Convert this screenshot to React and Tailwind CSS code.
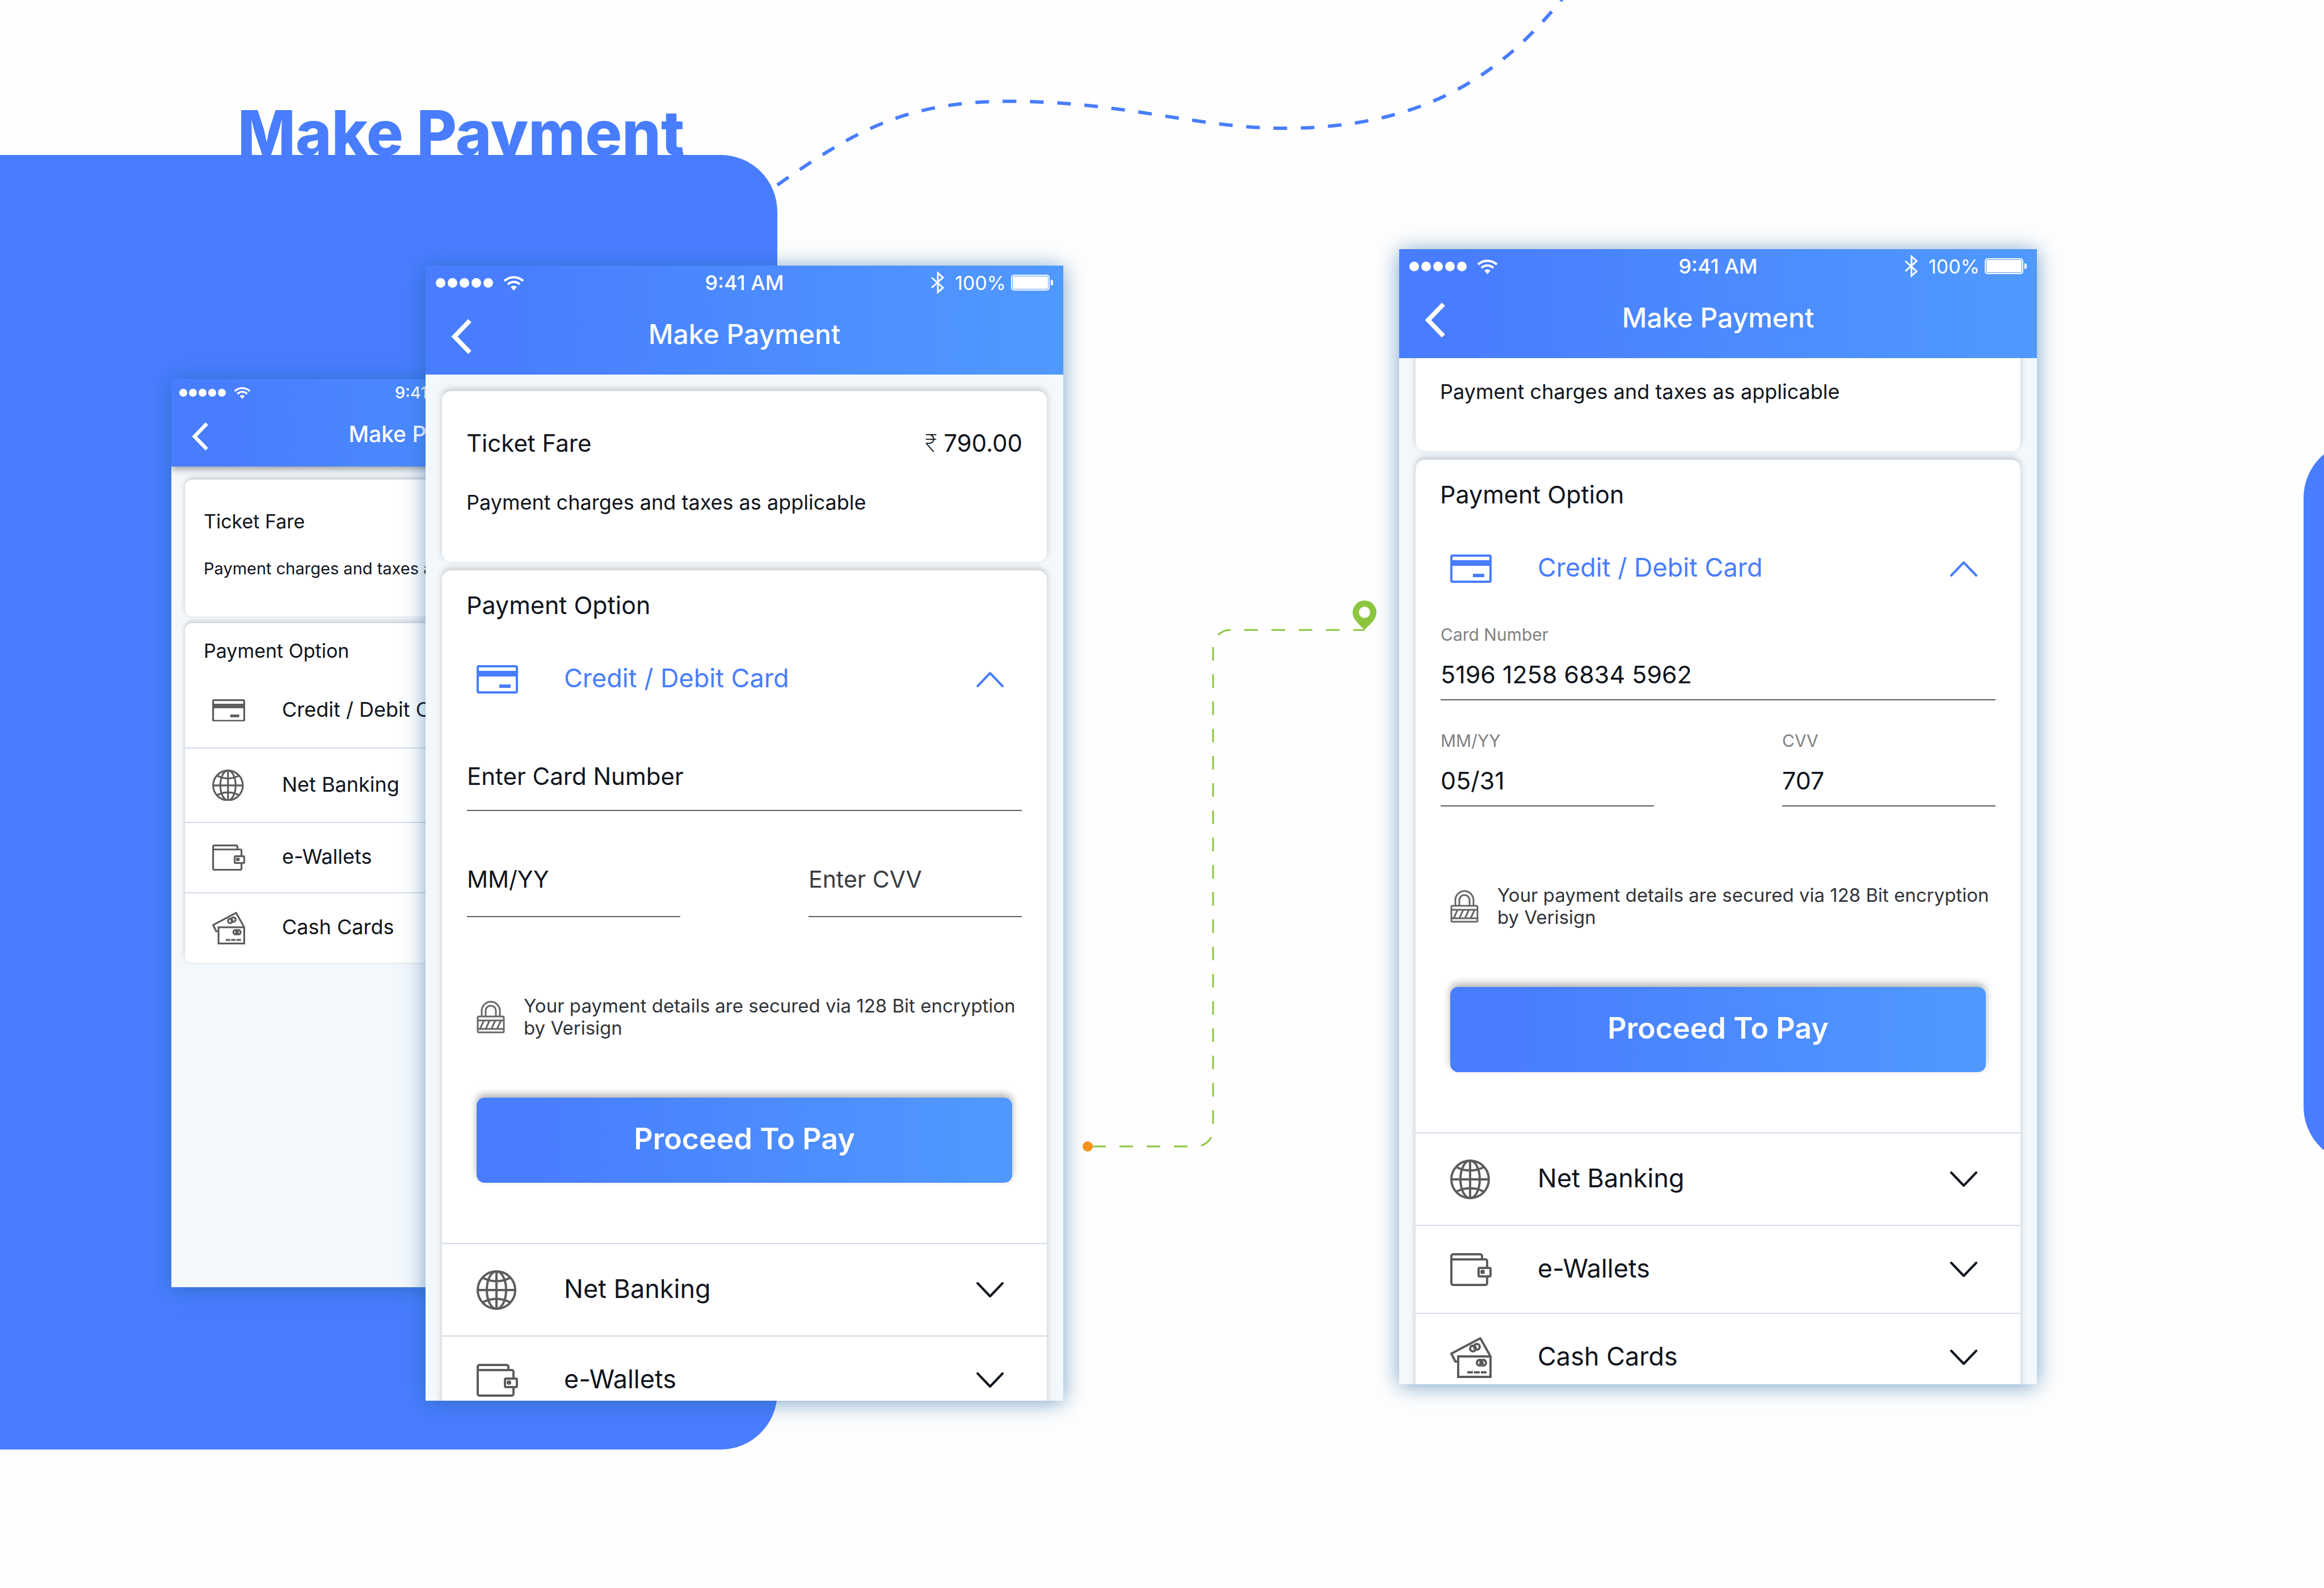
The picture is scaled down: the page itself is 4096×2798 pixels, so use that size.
import React, { useId } from "react";

/* ---------- icons ---------- */

function WifiIcon({ className }) {
  return (
    <svg viewBox="0 0 37 27" className={className} fill="none" stroke="currentColor" strokeWidth="4" aria-hidden="true">
      <path d="M2 10a24 24 0 0 1 33 0" />
      <path d="M8 16a15 15 0 0 1 21 0" />
      <path d="M18.500 27l-5.500-6.500a9 9 0 0 1 11 0z" fill="currentColor" stroke="none" />
    </svg>
  );
}

function BluetoothIcon({ className }) {
  return (
    <svg viewBox="0 0 25 40" className={className} fill="none" stroke="currentColor" strokeWidth="3" aria-hidden="true">
      <path d="M2 11l20 18-9 8V3l9 8L2 29" />
    </svg>
  );
}

function BatteryIcon({ className }) {
  return (
    <svg viewBox="0 0 74 28" className={className} aria-hidden="true">
      <rect x="1" y="1" width="66" height="26" rx="4" fill="none" stroke="currentColor" strokeWidth="2" />
      <rect x="3" y="3" width="62" height="22" rx="2" fill="currentColor" />
      <path d="M70 9h1a3 3 0 0 1 3 3v4a3 3 0 0 1-3 3h-1z" fill="currentColor" />
    </svg>
  );
}

function BackIcon({ className }) {
  return (
    <svg viewBox="0 0 36 62" className={className} fill="none" stroke="currentColor" strokeWidth="8" aria-hidden="true">
      <path d="M33 3L6 31l27 28" />
    </svg>
  );
}

function ChevronIcon({ up }) {
  return (
    <svg viewBox="0 0 48 28" className="w-12 shrink-0" fill="none" stroke="currentColor" strokeWidth="4" strokeLinecap="round" strokeLinejoin="round" aria-hidden="true">
      <path d={up ? "M2 26L24 3l22 23" : "M2 2l22 23L46 2"} />
    </svg>
  );
}

function CardIcon({ className }) {
  return (
    <svg viewBox="0 0 73 50" className={className} aria-hidden="true">
      <rect x="2" y="2" width="69" height="46" rx="2" fill="none" stroke="currentColor" strokeWidth="4" />
      <rect x="2" y="10" width="69" height="10" fill="currentColor" />
      <rect x="40" y="34" width="20" height="6" fill="currentColor" />
    </svg>
  );
}

function GlobeIcon({ className }) {
  return (
    <svg viewBox="0 0 73 70" className={className} fill="none" stroke="currentColor" strokeWidth="4" aria-hidden="true">
      <circle cx="35" cy="35" r="33" />
      <ellipse cx="35" cy="35" rx="17" ry="33" />
      <path d="M35 2v66M2 35h66M10 13q25 13 50 0M10 57q25-13 50 0" />
    </svg>
  );
}

function WalletIcon({ className }) {
  return (
    <svg viewBox="0 0 73 58" className={className} fill="none" stroke="currentColor" strokeWidth="4" aria-hidden="true">
      <path d="M2 11V5a3 3 0 0 1 3-3h48a3 3 0 0 1 3 3v6" />
      <path d="M2 11h60a3 3 0 0 1 3 3v12M65 41v12a3 3 0 0 1-3 3H5a3 3 0 0 1-3-3V11" />
      <rect x="50" y="26" width="21" height="15" rx="2" />
      <circle cx="57" cy="33" r="4" fill="currentColor" stroke="none" />
    </svg>
  );
}

function CashIcon({ className }) {
  return (
    <svg viewBox="0 0 73 73" className={className} fill="none" stroke="currentColor" strokeWidth="4" aria-hidden="true">
      <path d="M12 44l-3 0L2 30 53 3l17 30" strokeLinejoin="round" />
      <rect x="14" y="35" width="57" height="36" />
      <circle cx="40" cy="21" r="5" />
      <circle cx="47" cy="18" r="5" />
      <circle cx="52" cy="46" r="5" />
      <circle cx="58" cy="46" r="5" />
      <path d="M30 63h10M42 63h10M54 63h10" />
    </svg>
  );
}

function LockIcon({ className }) {
  return (
    <svg viewBox="0 0 50 58" className={className} fill="none" stroke="currentColor" strokeWidth="3" aria-hidden="true">
      <path d="M9 27V18a16 16 0 0 1 32 0v9M16 27V18a9 9 0 0 1 18 0v9" />
      <rect x="2" y="28" width="46" height="28" rx="2" />
      <path d="M2 35h46M2 50h46M6 50l7-15M16 50l7-15M26 50l7-15M36 50l7-15" />
    </svg>
  );
}

/* ---------- sizes ---------- */

const LARGE = {
  header: "h-[192px]",
  status: "h-[60px] px-[18px] text-[34px]",
  time: "text-[36px]",
  dots: "gap-1",
  dot: "size-[17px]",
  wifi: "ml-[18px] w-[37px]",
  nav: "h-[122px] text-[48px]",
  back: "pl-[45px] pt-2",
  backIcon: "w-9",
  body: "px-[29px] pt-[29px] gap-[15px]",
  card: "rounded-[16px] shadow-[0_-4px_12px_rgba(0,0,0,0.2)]",
  fare: "px-[43px] pt-[68px] pb-[83px]",
  fareRow: "text-[42px] leading-[48px]",
  note: "mt-[58px] text-[36px] leading-[44px]",
  heading: "px-[43px] pt-[37px] pb-[25px] text-[43px] leading-[48px]",
  row: "pl-[61px] pr-[76px] text-[45px]",
  tall: "h-[163px]",
  short: "h-[155px]",
  icon: "w-[73px]",
  label: "pl-[81px] pb-1",
};

const SMALL = {
  header: "h-[154px] shadow-[0_4px_12px_rgba(0,0,0,0.4)]",
  status: "h-[48px] px-[14px] text-[27px]",
  time: "text-[29px]",
  dots: "gap-[3px]",
  dot: "size-[14px]",
  wifi: "ml-[14px] w-[30px]",
  nav: "h-[98px] text-[39px]",
  back: "pl-[36px] pt-2",
  backIcon: "w-[29px]",
  body: "px-[24px] pt-[23px] gap-3",
  card: "rounded-[13px] shadow-[0_-3px_10px_rgba(0,0,0,0.2)]",
  fare: "px-[33px] pt-[55px] pb-[66px]",
  fareRow: "text-[34px] leading-[38px]",
  note: "mt-[46px] text-[29px] leading-[36px]",
  heading: "px-[33px] pt-[30px] pb-5 text-[34px] leading-[38px]",
  row: "pl-[48px] pr-[61px] text-[36px]",
  tall: "h-[131px]",
  short: "h-[124px]",
  icon: "w-[58px]",
  label: "pl-[65px] pb-1",
};

/* ---------- phone parts ---------- */

function PhoneHeader({ s, full }) {
  return (
    <header className={`relative shrink-0 bg-linear-to-r from-[#487dff] from-10% to-[#5099ff] text-white ${s.header}`}>
      <div className={`grid grid-cols-[1fr_auto_1fr] items-center ${s.status}`}>
        <div className="flex items-center">
          <span className={`flex ${s.dots}`}>
            {[0, 1, 2, 3, 4].map((n) => (
              <span key={n} className={`rounded-full bg-white ${s.dot}`} />
            ))}
          </span>
          <WifiIcon className={s.wifi} />
        </div>
        <span className={`font-medium ${s.time}`}>9:41 AM</span>
        {full && (
          <div className="flex items-center justify-end">
            <BluetoothIcon className="mr-[18px] w-[25px]" />
            <span>100%</span>
            <BatteryIcon className="ml-[9px] w-[74px]" />
          </div>
        )}
      </div>
      <div className={`grid grid-cols-[1fr_auto_1fr] items-center ${s.nav}`}>
        <button type="button" aria-label="Back" className={`justify-self-start ${s.back}`}>
          <BackIcon className={s.backIcon} />
        </button>
        <h2 className="font-medium">Make Payment</h2>
      </div>
    </header>
  );
}

function FareCard({ s, amount }) {
  return (
    <section className={`bg-white ${s.card} ${s.fare}`}>
      <div className={`flex justify-between ${s.fareRow}`}>
        <span>Ticket Fare</span>
        {amount && (
          <span>
            <span className="font-extralight">₹</span> {amount}
          </span>
        )}
      </div>
      <p className={s.note}>Payment charges and taxes as applicable</p>
    </section>
  );
}

function OptionRow({ s, icon: Icon, label, tall, open, divider, chevron }) {
  return (
    <button
      type="button"
      aria-expanded={!!open}
      className={`flex w-full items-center text-left ${s.row} ${tall ? s.tall : s.short} ${
        divider ? "border-t-2 border-[#d3dbe9]" : ""
      } ${open ? "text-[#487dff]" : ""}`}
    >
      <Icon className={`shrink-0 ${s.icon} ${open ? "" : "text-[#5c5c5c]"}`} />
      <span className={`flex-1 whitespace-nowrap ${s.label}`}>{label}</span>
      {chevron && <ChevronIcon up={open} />}
    </button>
  );
}

function Field({ label, value, placeholder, className, inputClass }) {
  const id = useId();
  return (
    <div className={`flex flex-col justify-end border-b-2 border-[#5a5d63] ${className}`}>
      {value && (
        <label htmlFor={id} className="mb-6 text-[30px] leading-9 text-[#808080]">
          {label}
        </label>
      )}
      <input
        id={id}
        type="text"
        aria-label={value ? undefined : label}
        defaultValue={value}
        placeholder={placeholder}
        className={`h-14 w-full bg-transparent outline-none ${inputClass}`}
      />
    </div>
  );
}

function CardForm({ filled }) {
  return (
    <form onSubmit={(e) => e.preventDefault()}>
      <div className="px-[44px]">
        <Field
          label="Card Number"
          value={filled ? "5196 1258 6834 5962" : ""}
          placeholder="Enter Card Number"
          className="h-[151px]"
          inputClass={filled ? "mb-4 text-[43px]" : "mb-8 text-[42px] placeholder:text-[#10141c]"}
        />
        <div className="grid grid-cols-2 gap-[226px]">
          <Field
            label="MM/YY"
            value={filled ? "05/31" : ""}
            placeholder="MM/YY"
            className="h-[187px]"
            inputClass={filled ? "mb-4 text-[43px]" : "mb-9 text-[41px] placeholder:text-[#10141c]"}
          />
          <Field
            label="CVV"
            value={filled ? "707" : ""}
            placeholder="Enter CVV"
            className="h-[187px]"
            inputClass={filled ? "mb-4 text-[43px]" : "mb-9 text-[41px] placeholder:text-[#3a3c40]"}
          />
        </div>
      </div>
      <div className="mt-[137px] flex items-center gap-[33px] pl-[61px] text-[#303338]">
        <LockIcon className="w-[50px] shrink-0 text-[#666666]" />
        <p className="text-[33px] leading-[39px] whitespace-nowrap">
          Your payment details are secured via 128 Bit encryption
          <br />
          by Verisign
        </p>
      </div>
      <div className="px-[61px] pt-[103px] pb-[106px]">
        <button
          type="submit"
          className="h-[150px] w-full rounded-[14px] bg-linear-to-r from-[#487dff] from-10% to-[#5099ff] pb-1 text-[52px] font-semibold text-white shadow-[0_-6px_14px_rgba(0,0,0,0.3)]"
        >
          Proceed To Pay
        </button>
      </div>
    </form>
  );
}

function Phone({ small, scrolled, filled, className }) {
  const s = small ? SMALL : LARGE;
  const full = !small;
  return (
    <article
      className={`isolate flex min-w-0 flex-col self-start overflow-hidden bg-[#f3f8fd] text-[#10141c] shadow-[0_3px_36px_rgba(34,101,161,0.6)] ${className}`}
    >
      <PhoneHeader s={s} full={full} />
      <div className="min-h-0 flex-1 overflow-hidden">
        <div className={`flex flex-col ${s.body} ${scrolled ? "-mt-[166px]" : ""}`}>
          <FareCard s={s} amount={full ? "790.00" : ""} />
          <section className={`bg-white ${s.card}`}>
            <h3 className={s.heading}>Payment Option</h3>
            <OptionRow s={s} icon={CardIcon} label="Credit / Debit Card" tall open={full} chevron={full} />
            {full && <CardForm filled={filled} />}
            <OptionRow s={s} icon={GlobeIcon} label="Net Banking" tall divider chevron={full} />
            <OptionRow s={s} icon={WalletIcon} label="e-Wallets" divider chevron={full} />
            {(small || scrolled) && <OptionRow s={s} icon={CashIcon} label="Cash Cards" divider chevron={full} />}
            {full && !scrolled && <div className="h-12" />}
          </section>
        </div>
      </div>
    </article>
  );
}

/* ---------- page ---------- */

export default function App() {
  return (
    <main className="grid min-h-screen grid-cols-[minmax(0,302fr)_minmax(0,448fr)_minmax(0,452fr)_minmax(0,168fr)_minmax(0,504fr)_minmax(0,592fr)_minmax(0,1124fr)_minmax(0,470fr)_minmax(0,36fr)] overflow-hidden bg-[#fefefe] font-['Inter',sans-serif]">
      <h1 className="col-[1/6] row-start-1 mt-[170px] self-start pl-[419px] text-[108px] leading-[128px] font-extrabold text-[#487dff]">
        Make Payment
      </h1>
      <div className="col-[1/5] row-start-1 mt-[273px] h-[2281px] self-start rounded-r-[100px] bg-[#487dff]" />
      <div className="col-[9/10] row-start-1 mt-[777px] h-[1273px] w-[300px] self-start rounded-l-[100px] bg-[#487dff]" />

      <svg viewBox="1370 0 2220 340" className="col-[5/8] row-start-1 w-full self-start overflow-visible" fill="none" aria-hidden="true">
        <path
          d="M1370 326C1500 236 1590 178.500 1778 178.500C1980 178.500 2110 226 2262 226C2500 226 2640 140 2755-4"
          stroke="#487dff"
          strokeWidth="6"
          strokeDasharray="24 24"
        />
      </svg>

      <Phone small className="col-[2/5] row-start-1 mt-[668px] mr-[168px] h-[1600px]" />
      <Phone className="col-[3/6] row-start-1 mt-[468px] h-[2000px]" />

      <svg viewBox="1874 1050 592 990" className="col-[6/7] row-start-1 mt-[1050px] w-full self-start overflow-visible" fill="none" aria-hidden="true">
        <path
          d="M1925 2020H2108a30 30 0 0 0 30-30V1140a30 30 0 0 1 30-30H2405"
          stroke="#8cc63f"
          strokeWidth="3"
          strokeDasharray="24 24"
        />
        <circle cx="1917" cy="2020" r="9" fill="#f7931e" />
        <path
          d="M2405 1110c-8-9-21-18-21-31a21 21 0 0 1 42 0c0 13-13 22-21 31zM2405 1089a10 10 0 1 0 0-20 10 10 0 0 0 0 20z"
          fill="#8cc63f"
          fillRule="evenodd"
        />
      </svg>

      <Phone scrolled filled className="col-[7/8] row-start-1 mt-[439px] h-[2000px]" />
    </main>
  );
}
